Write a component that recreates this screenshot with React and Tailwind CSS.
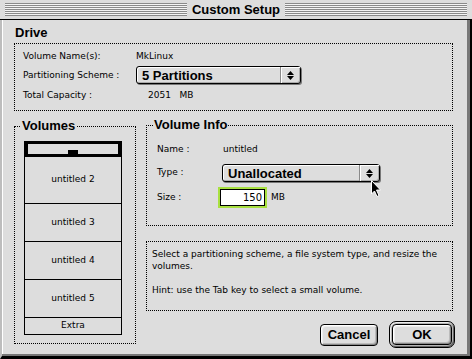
import React from "react";

const boldF = "font-['Liberation_Sans',Arial,sans-serif] font-bold text-[13px]";

function Arrows() {
  return (
    <svg width="7" height="9" viewBox="0 0 7 9">
      <path d="M3.5 0 L7 4 L0 4 Z" fill="#000" />
      <path d="M0 5 L7 5 L3.5 9 Z" fill="#000" />
    </svg>
  );
}

function Popup({ label, w }) {
  return (
    <div className={`flex h-[18px] ${w} rounded-[3px] border border-black bg-[#dddddd] shadow-[inset_1px_1px_0_#fff,inset_-1px_-1px_0_#aaa,1px_1px_0_#777]`}>
      <div className={`flex flex-1 items-center pl-[5px] leading-none ${boldF}`}>{label}</div>
      <div className="flex w-[20px] items-center justify-center border-l border-[#8a8a8a] shadow-[inset_1px_1px_0_#fff]">
        <Arrows />
      </div>
    </div>
  );
}

function Row({ children, h = "h-[14px]" }) {
  return <div className={`flex items-center ${h}`}>{children}</div>;
}

function VolRow({ label, h }) {
  return (
    <div className={`flex ${h} items-center justify-center border-b border-black`}>{label}</div>
  );
}

export default function App() {
  return (
    <div className="relative h-[359px] w-[472px] overflow-hidden bg-[#dddddd] font-['DejaVu_Sans',sans-serif] text-[9px] text-black">
      {/* Title bar */}
      <div className="flex h-[20px] items-center border-b border-black px-[5px]">
        <div className="h-[13px] flex-1 bg-[repeating-linear-gradient(to_bottom,#8a8a8a_0px,#8a8a8a_1px,#f4f4f4_1px,#f4f4f4_2px)]" />
        <div className={`px-[5px] leading-none ${boldF}`}>Custom Setup</div>
        <div className="h-[13px] flex-1 bg-[repeating-linear-gradient(to_bottom,#8a8a8a_0px,#8a8a8a_1px,#f4f4f4_1px,#f4f4f4_2px)]" />
      </div>

      {/* Body */}
      <div className="h-[339px] border-r-[2px] border-b-[3px] border-l-[2px] border-black border-l-[#bdbdbd]">
        <div className="flex h-full flex-col border-r-[3px] border-b-[2px] border-[#777] pl-[12px] pr-[14px] pt-[6px] shadow-[inset_1px_0_0_#fff]">
          <div className={`h-[14px] leading-[14px] pl-[1px] ${boldF}`}>Drive</div>
          <div className="mt-[3px] flex h-[68px] flex-col border border-dotted border-black pl-[8px] pt-[6px]">
            <Row>
              <div className="w-[113px]">Volume Name(s):</div>
              <div>MkLinux</div>
            </Row>
            <Row h="h-[19px] mt-[2px] items-start">
              <div className="w-[113px] self-center">Partitioning Scheme :</div>
              <Popup label="5 Partitions" w="w-[165px]" />
            </Row>
            <Row h="h-[14px] mt-[4px]">
              <div className="w-[125px]">Total Capacity :</div>
              <div>2051&nbsp;&nbsp;&nbsp;MB</div>
            </Row>
          </div>

          <div className="mt-[8px] flex items-start gap-[10px]">
            {/* Volumes */}
            <fieldset className="m-0 h-[225px] w-[122px] border border-dotted border-black px-[9px] pb-0 pt-[8px]">
              <legend className={`ml-[-3px] px-[1px] leading-[14px] ${boldF}`}>Volumes</legend>
              <div className="flex w-[98px] flex-col border-x border-black">
                <div className="flex h-[13px] items-end justify-center border-[3px] border-x-[3px] border-black border-b-0 bg-[#dddddd]">
                  <div className="mb-0 h-[4px] w-[10px] bg-black" />
                </div>
                <div className="h-[3px] bg-black" />
                <VolRow label="untitled 2" h="h-[47px]" />
                <VolRow label="untitled 3" h="h-[38px]" />
                <VolRow label="untitled 4" h="h-[38px]" />
                <VolRow label="untitled 5" h="h-[38px]" />
                <VolRow label="Extra" h="h-[17px]" />
              </div>
            </fieldset>

            {/* Right column */}
            <div className="flex flex-1 flex-col">
              <fieldset className="m-0 mt-[-1px] h-[108px] border border-dotted border-black px-[10px] pb-0 pt-[11px]">
                <legend className={`ml-[-4px] px-[1px] leading-[14px] ${boldF}`}>Volume Info</legend>
                <Row h="h-[14px]">
                  <div className="w-[65px]">Name :</div>
                  <div className="pl-[1px]">untitled</div>
                </Row>
                <Row h="h-[18px] mt-[7px]">
                  <div className="w-[65px]">Type :</div>
                  <Popup label="Unallocated" w="w-[158px]" />
                </Row>
                <Row h="h-[21px] mt-[5px]">
                  <div className="w-[61px]">Size :</div>
                  <div className="flex h-[21px] w-[49px] items-stretch border-[2px] border-[#a8e040] ">
                    <div className="flex flex-1 items-center justify-end border border-black bg-white pr-[2px] text-[10px]">
                      150
                    </div>
                  </div>
                  <div className="pl-[4px]">MB</div>
                </Row>
              </fieldset>

              <div className="mt-[15px] h-[70px] border border-dotted border-black px-[5px] pt-[6px] leading-[12px]">
                <div>Select a partitioning scheme, a file system type, and resize the volumes.</div>
                <div className="mt-[12px]">Hint: use the Tab key to select a small volume.</div>
              </div>

              <div className="mr-[-2px] mt-[10px] flex items-center justify-end gap-[11px]">
                <div className={`flex h-[22px] w-[58px] items-center justify-center rounded-[4px] border border-black bg-[#dddddd] shadow-[inset_1px_1px_0_#fff,inset_-1px_-1px_0_#888,inset_2px_2px_0_#eee,inset_-2px_-2px_0_#bbb] leading-none ${boldF}`}>
                  Cancel
                </div>
                <div className="flex h-[27px] w-[66px] items-center justify-center rounded-[7px] border border-black bg-[#b5b5b5] p-[2px] shadow-[inset_1px_1px_0_#eee,inset_-1px_-1px_0_#666]">
                  <div className={`flex h-full w-full items-center justify-center rounded-[4px] border border-black bg-[#dddddd] shadow-[inset_1px_1px_0_#fff,inset_-1px_-1px_0_#888,inset_2px_2px_0_#eee,inset_-2px_-2px_0_#bbb] leading-none ${boldF}`}>
                    OK
                  </div>
                </div>
              </div>
            </div>
          </div>
        </div>
      </div>

      {/* Mouse cursor */}
      <svg className="absolute left-[370px] top-[180px]" width="12" height="18" viewBox="0 0 12 18">
        <path d="M1.5 0.5 L1.5 14 L4.5 11 L7 16.5 L9 15.5 L6.5 10 L10.5 10 Z" fill="#000" stroke="#fff" strokeWidth="1" />
      </svg>
    </div>
  );
}
